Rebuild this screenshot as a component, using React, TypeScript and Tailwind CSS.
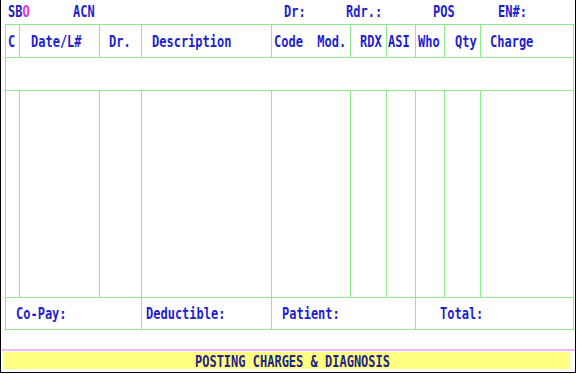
import React from "react";

const mono = { fontFamily: '"DejaVu Sans Mono", "Liberation Mono", monospace' };

function L({ children, className = "" }: { children: React.ReactNode; className?: string }) {
  return (
    <span
      style={mono}
      className={`inline-block whitespace-pre text-[12px] font-bold leading-none scale-y-[1.25] ${className}`}
    >
      {children}
    </span>
  );
}

const cell = "flex items-center border-r border-b border-[#8eea8e]";

export default function App() {
  return (
    <div className="w-[577px] h-[374px] bg-white">
      <div className="w-[576px] h-[373px] border-l border-r border-b border-black flex flex-col">
        {/* top info row */}
        <div className="h-[24px] flex items-center pb-[5px] pl-[7px] text-[#1e1ecc]">
          <div className="w-[65px]">
            <L>
              SB<span className="text-[#e030e0]">O</span>
            </L>
          </div>
          <div className="w-[211px]"><L>ACN</L></div>
          <div className="w-[62px]"><L>Dr:</L></div>
          <div className="w-[87px]"><L>Rdr.:</L></div>
          <div className="w-[65px]"><L>POS</L></div>
          <div><L>EN#:</L></div>
        </div>

        {/* table */}
        <div className="ml-[4px] w-[569px] grid grid-cols-[14px_80px_42px_130px_79px_36px_29px_29px_36px_93px] grid-rows-[33px_33px_207px_32px] border-l border-t border-[#8eea8e] text-[#1e1ecc]">
          <div className={`${cell} pl-[2px] pt-[1px]`}><L>C</L></div>
          <div className={`${cell} pl-[11px] pt-[1px]`}><L>Date/L#</L></div>
          <div className={`${cell} pl-[9px] pt-[1px]`}><L>Dr.</L></div>
          <div className={`${cell} pl-[10px] pt-[1px]`}><L>Description</L></div>
          <div className={`${cell} pl-[2px] pt-[1px]`}><L>Code  Mod.</L></div>
          <div className={`${cell} pl-[9px] pt-[1px]`}><L>RDX</L></div>
          <div className={`${cell} pl-[1px] pt-[1px]`}><L>ASI</L></div>
          <div className={`${cell} pl-[2px] pt-[1px]`}><L>Who</L></div>
          <div className={`${cell} pl-[10px] pt-[1px]`}><L>Qty</L></div>
          <div className={`${cell} pl-[9px] pt-[1px]`}><L>Charge</L></div>

          <div className="col-span-10 border-r border-b border-[#8eea8e]" />

          <div className={cell} />
          <div className={cell} />
          <div className={cell} />
          <div className={cell} />
          <div className={cell} />
          <div className={cell} />
          <div className={cell} />
          <div className={cell} />
          <div className={cell} />
          <div className={cell} />

          <div className={`${cell} col-span-3 pl-[10px]`}><L>Co-Pay:</L></div>
          <div className={`${cell} pl-[4px]`}><L>Deductible:</L></div>
          <div className={`${cell} col-span-3 pl-[10px]`}><L>Patient:</L></div>
          <div className={`${cell} col-span-3 pl-[24px]`}><L>Total:</L></div>
        </div>

        {/* status bar */}
        <div className="mt-[19px] ml-[1px] w-[573px] h-[2px] bg-[#f2b8f2]" />
        <div className="mt-[1px] ml-[2px] w-[567px] h-[17px] bg-[#ffff80] flex items-center justify-center text-[#22228c]">
          <L className="translate-x-[6px] translate-y-[1px]">POSTING CHARGES &amp; DIAGNOSIS</L>
        </div>
      </div>
    </div>
  );
}
